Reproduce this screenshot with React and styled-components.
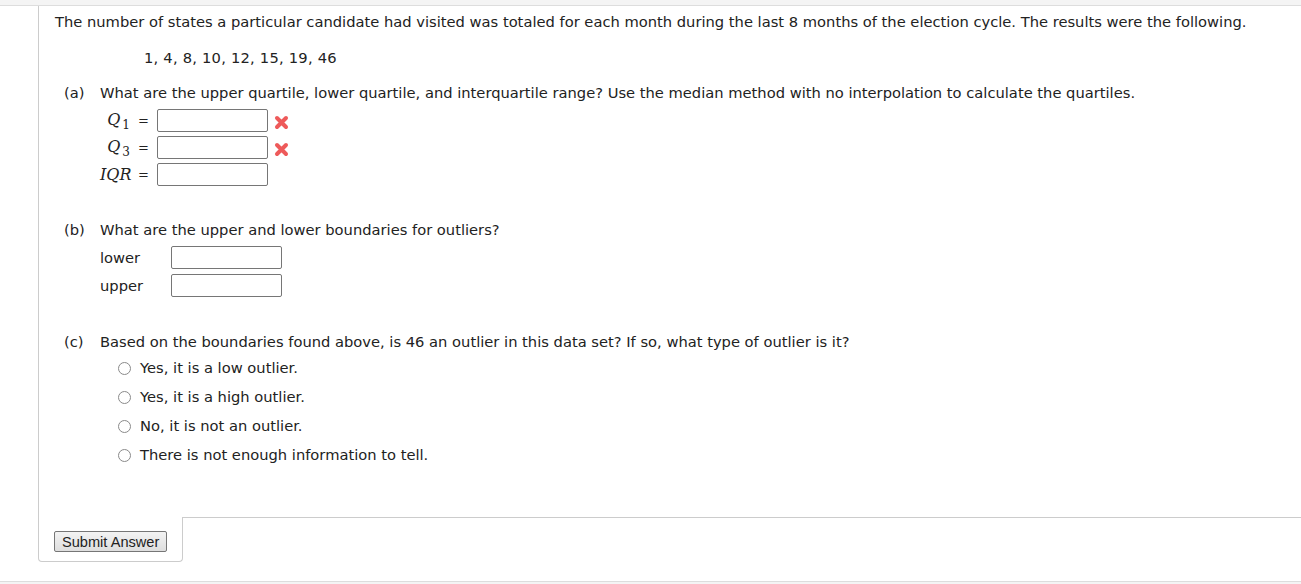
import styled, { createGlobalStyle } from 'styled-components';

const GlobalStyle = createGlobalStyle`
  html, body {
    margin: 0;
    padding: 0;
    background: #fff;
  }
  body {
    font-family: "DejaVu Sans", Verdana, sans-serif;
    font-size: 14.7px;
    color: #222;
  }
`;

const Page = styled.div`
  width: 1301px;
  height: 584px;
  display: flex;
  flex-direction: column;
  overflow: hidden;
`;

const TopBand = styled.div`
  height: 5px;
  background: #f4f4f4;
  border-bottom: 1px solid #ddd;
`;

const Question = styled.div`
  margin-left: 38px;
  border-left: 1px solid #ccc;
  padding: 6px 0 0 16px;
  height: 511px;
  box-sizing: border-box;
`;

const Intro = styled.p`
  margin: 0;
  line-height: 20px;
`;

const DataLine = styled.p`
  margin: 16px 0 0 89px;
  line-height: 20px;
  letter-spacing: 0.22px;
`;

const Part = styled.div`
  margin-top: ${(p) => p.$top}px;
  padding-left: 9px;
  display: grid;
  grid-template-columns: 36px 1fr;
`;

const PartLabel = styled.span`
  line-height: 20px;
`;

const PartBody = styled.div`
  display: flex;
  flex-direction: column;
`;

const Prompt = styled.div`
  line-height: 20px;
`;

const MathGrid = styled.div`
  display: grid;
  grid-template-columns: 30px 27px 111px 22px;
  grid-auto-rows: 27px;
  align-items: center;
  margin-top: 4px;
`;

const MathLabel = styled.span`
  font-family: "DejaVu Serif", "Liberation Serif", serif;
  font-style: italic;
  font-size: 16px;
  text-align: right;
  color: #222;
  white-space: nowrap;
  sub {
    font-style: normal;
    font-size: 12px;
    vertical-align: -4px;
    margin-left: 2px;
  }
`;

const Equals = styled.span`
  text-align: center;
  font-size: 13px;
`;

const Field = styled.input`
  box-sizing: border-box;
  width: 111px;
  height: 23px;
  border: 1px solid #767676;
  border-radius: 2px;
  padding: 1px 3px;
  font: inherit;
  background: #fff;
  margin: 0;
`;

const Mark = styled.svg`
  width: 15px;
  height: 15px;
  margin-left: 6px;
  margin-top: 4px;
`;

const BoundGrid = styled.div`
  display: grid;
  grid-template-columns: 71px 111px;
  grid-auto-rows: 28px;
  align-items: center;
  margin-top: 3px;
`;

const Options = styled.div`
  display: flex;
  flex-direction: column;
  margin: 6px 0 0 18px;
  gap: 9px;
`;

const Option = styled.label`
  display: flex;
  align-items: center;
  gap: 9px;
  line-height: 20px;
`;

const Radio = styled.input`
  width: 13px;
  height: 13px;
  margin: 0;
  accent-color: #767676;
  opacity: 0.85;
`;

const Footer = styled.div`
  display: flex;
  height: 45px;
`;

const ButtonCell = styled.div`
  margin-left: 38px;
  width: 145px;
  box-sizing: border-box;
  border: 1px solid #ccc;
  border-top: none;
  border-radius: 0 0 4px 4px;
  padding: 14px 0 0 15px;
`;

const Filler = styled.div`
  flex: 1;
  border-top: 1px solid #ccc;
`;

const SubmitButton = styled.button`
  font-family: "Liberation Sans", Arial, sans-serif;
  font-size: 14.6px;
  color: #222;
  height: 21px;
  padding: 0 7px;
  border: 1px solid #767676;
  border-radius: 2px;
  background: linear-gradient(#f3f3f3, #dedede);
  line-height: 18px;
`;

const BottomBand = styled.div`
  margin-top: 19px;
  flex: 1;
  background: #f4f4f4;
  border-top: 1px solid #ddd;
`;

function WrongMark() {
  return (
    <Mark viewBox="0 0 15 15">
      <path
        d="M3 3 L12 12 M12 3 L3 12"
        stroke="#ee5a5a"
        strokeWidth="4"
        strokeLinecap="round"
      />
    </Mark>
  );
}

const options = [
  'Yes, it is a low outlier.',
  'Yes, it is a high outlier.',
  'No, it is not an outlier.',
  'There is not enough information to tell.',
];

export default function App() {
  return (
    <Page>
      <GlobalStyle />
      <TopBand />
      <Question>
        <Intro>
          The number of states a particular candidate had visited was totaled for each month
          during the last 8 months of the election cycle. The results were the following.
        </Intro>
        <DataLine>1, 4, 8, 10, 12, 15, 19, 46</DataLine>

        <Part $top={15}>
          <PartLabel>(a)</PartLabel>
          <PartBody>
            <Prompt>
              What are the upper quartile, lower quartile, and interquartile range? Use the
              median method with no interpolation to calculate the quartiles.
            </Prompt>
            <MathGrid>
              <MathLabel>
                Q<sub>1</sub>
              </MathLabel>
              <Equals>=</Equals>
              <Field type="text" />
              <WrongMark />
              <MathLabel>
                Q<sub>3</sub>
              </MathLabel>
              <Equals>=</Equals>
              <Field type="text" />
              <WrongMark />
              <MathLabel>IQR</MathLabel>
              <Equals>=</Equals>
              <Field type="text" />
              <span />
            </MathGrid>
          </PartBody>
        </Part>

        <Part $top={32}>
          <PartLabel>(b)</PartLabel>
          <PartBody>
            <Prompt>What are the upper and lower boundaries for outliers?</Prompt>
            <BoundGrid>
              <span>lower</span>
              <Field type="text" />
              <span>upper</span>
              <Field type="text" />
            </BoundGrid>
          </PartBody>
        </Part>

        <Part $top={33}>
          <PartLabel>(c)</PartLabel>
          <PartBody>
            <Prompt>
              Based on the boundaries found above, is 46 an outlier in this data set? If so,
              what type of outlier is it?
            </Prompt>
            <Options>
              {options.map((o) => (
                <Option key={o}>
                  <Radio type="radio" name="outlier" />
                  {o}
                </Option>
              ))}
            </Options>
          </PartBody>
        </Part>
      </Question>
      <Footer>
        <ButtonCell>
          <SubmitButton type="button">Submit Answer</SubmitButton>
        </ButtonCell>
        <Filler />
      </Footer>
      <BottomBand />
    </Page>
  );
}
